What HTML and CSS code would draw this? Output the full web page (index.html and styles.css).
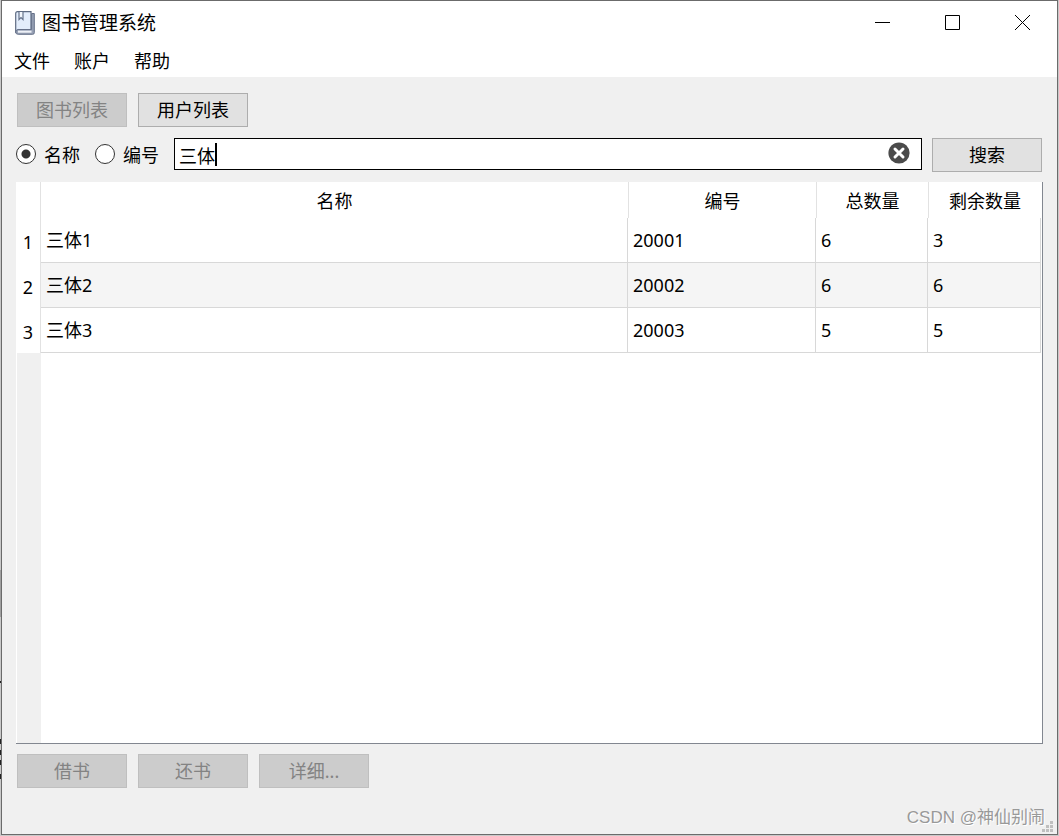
FILE: index.html
```html
<!DOCTYPE html>
<html lang="zh-CN">
<head>
<meta charset="utf-8">
<title>图书管理系统</title>
<link rel="stylesheet" href="styles.css">
</head>
<body>
<div class="window">
  <header class="titlebar">
    <svg class="app-icon" width="20" height="24" viewBox="0 0 20 24" aria-hidden="true">
      <path d="M2.500.7H16v18H3.500L.7 21V2.500Q.7.7 2.500.7Z" fill="#e3edfb" stroke="#5e6b82" stroke-width="1.200"/>
      <path d="M16.600 2.500h2.700v19.200q0 1.600-1.600 1.600H3.200Q.7 23.300.7 21t2.500-2.500H16.600Z" fill="#98a2b6" stroke="#667189" stroke-width="1"/>
      <path d="M3 20.700H16.500" stroke="#eef1f7" stroke-width="2"/>
      <path d="M4 1v7.500l2-2 2 2V1" fill="#f2f6fc" stroke="#66748c" stroke-width="1.200"/>
    </svg>
    <h1 class="title">图书管理系统</h1>
    <div class="window-controls">
      <button class="window-button" type="button" aria-label="最小化"><svg width="15" height="15"><path d="M0 7.500H15" stroke="#000"/></svg></button>
      <button class="window-button" type="button" aria-label="最大化"><svg width="15" height="15"><path d="M.5.5h14v14H.5Z" fill="none" stroke="#000"/></svg></button>
      <button class="window-button" type="button" aria-label="关闭"><svg width="15" height="15"><path d="M0 0L15 15M15 0L0 15" stroke="#000"/></svg></button>
    </div>
  </header>
  <nav class="menubar">
    <button class="menu" type="button">文件</button>
    <button class="menu" type="button">账户</button>
    <button class="menu" type="button">帮助</button>
  </nav>
  <main class="content">
    <div class="button-row">
      <button class="button" type="button" disabled>图书列表</button>
      <button class="button" type="button">用户列表</button>
    </div>
    <form class="search-row">
      <label class="option"><input class="radio" type="radio" name="field" checked>名称</label>
      <label class="option"><input class="radio" type="radio" name="field">编号</label>
      <div class="search-box">
        <input class="search-input" type="text" value="三体" aria-label="搜索内容">
        <span class="caret"></span>
        <button class="clear" type="button" aria-label="清除">
          <svg width="22" height="22" viewBox="0 0 22 22"><circle cx="11" cy="11" r="10.600" fill="#4b4b4b"/><path d="M7 7l8 8M15 7l-8 8" stroke="#fff" stroke-width="3" stroke-linecap="round"/></svg>
        </button>
      </div>
      <button class="button" type="button">搜索</button>
    </form>
    <div class="table-view">
      <table class="books">
        <colgroup><col class="col-index"><col><col class="col-id"><col class="col-total"><col class="col-left"></colgroup>
        <thead>
          <tr><td></td><th scope="col">名称</th><th scope="col">编号</th><th scope="col">总数量</th><th scope="col">剩余数量</th></tr>
        </thead>
        <tbody>
          <tr><th scope="row">1</th><td>三体1</td><td>20001</td><td>6</td><td>3</td></tr>
          <tr><th scope="row">2</th><td>三体2</td><td>20002</td><td>6</td><td>6</td></tr>
          <tr><th scope="row">3</th><td>三体3</td><td>20003</td><td>5</td><td>5</td></tr>
        </tbody>
      </table>
    </div>
    <div class="button-row">
      <button class="button" type="button" disabled>借书</button>
      <button class="button" type="button" disabled>还书</button>
      <button class="button" type="button" disabled>详细...</button>
    </div>
  </main>
  <svg class="size-grip" width="11" height="11" aria-hidden="true"><path d="M8 0h3v3H8ZM4 4h3v3H4ZM8 4h3v3H8ZM0 8h3v3H0ZM4 8h3v3H4ZM8 8h3v3H8Z" fill="#bfbfbf"/></svg>
  <span class="watermark">CSDN @神仙别闹</span>
</div>
</body>
</html>
```
FILE: styles.css
```css
* {
  box-sizing: border-box;
}

body {
  margin: 0;
  height: 100vh;
  padding: 0 1px 1px;
  background: linear-gradient(#c9c9c9 570px, #a0a0a0 570px 617px, #c9c9c9 617px 681px, #222 681px 683px, #c9c9c9 683px 739px, #222 739px 744px, #c9c9c9 744px 750px, #222 750px 755px, #c9c9c9 755px 760px, #222 760px 765px, #c9c9c9 765px 774px, #222 774px 779px, #c9c9c9 779px) left / 1px 100% no-repeat #c9c9c9;
  color: #000;
  font: 400 18px/24px "Noto Sans", "Noto Sans CJK SC", sans-serif;
}

button,
input {
  font: inherit;
  color: inherit;
}

.window {
  position: relative;
  display: flex;
  flex-direction: column;
  height: 100%;
  border: 1px solid #6b6b6b;
  background: #f0f0f0;
}

.titlebar {
  display: flex;
  align-items: center;
  height: 43px;
  padding-left: 13px;
  background: #fff;
}

.title {
  flex: 1;
  margin: 0 0 0 7px;
  font-size: 19px;
  font-weight: 400;
}

.window-controls {
  display: flex;
}

.window-button {
  display: flex;
  align-items: center;
  justify-content: center;
  width: 70px;
  height: 43px;
  padding: 0;
  border: 0;
  background: none;
}

.menubar {
  display: flex;
  height: 33px;
  padding-left: 12px;
  gap: 24px;
  background: #fff;
}

.menu {
  height: 33px;
  padding: 0;
  border: 0;
  background: none;
}

.content {
  display: flex;
  flex: 1;
  flex-direction: column;
  gap: 10px;
  padding: 16px 14px 46px;
}

.button-row {
  display: flex;
  gap: 11px;
  padding-left: 1px;
}

.button {
  width: 110px;
  height: 34px;
  padding: 0;
  border: 1px solid #adadad;
  background: #e1e1e1;
}

.button:disabled {
  border-color: #bfbfbf;
  background: #ccc;
  color: #838383;
}

.search-row {
  display: flex;
  align-items: center;
  margin-top: 1px;
  padding-right: 1px;
}

.option {
  display: flex;
  align-items: center;
  gap: 8px;
  margin-right: 15px;
}

.radio {
  appearance: none;
  width: 20px;
  height: 20px;
  margin: 0 0 2px;
  border: 1px solid #333;
  border-radius: 50%;
  background: #fff;
}

.radio:checked {
  background: radial-gradient(circle, #333 4px, #fff 5px);
}

.search-box {
  position: relative;
  flex: 1;
  height: 34px;
  margin-right: 10px;
}

.search-input {
  display: block;
  width: 100%;
  height: 32px;
  padding: 2px 40px 0 4px;
  border: 1px solid #000;
  border-radius: 0;
  background: #fff;
  outline: 0;
}

.caret {
  position: absolute;
  top: 5px;
  left: 41px;
  width: 2px;
  height: 23px;
  background: #000;
}

.clear {
  position: absolute;
  top: 4px;
  right: 12px;
  display: flex;
  padding: 0;
  border: 0;
  background: none;
}

.table-view {
  flex: 1;
  padding-right: 1px;
  border-right: 1px solid #828790;
  border-bottom: 1px solid #828790;
  background: linear-gradient(to right, #fff 1px, #f0f0f0 1px 25px, #fff 25px);
}

.books {
  width: 100%;
  table-layout: fixed;
  border-collapse: separate;
  border-spacing: 0;
  background: #fff;
}

.col-index {
  width: 25px;
}

.col-id {
  width: 188px;
}

.col-total {
  width: 112px;
}

.col-left {
  width: 113px;
}

.books th,
.books td {
  padding: 0;
  font-weight: 400;
}

.books thead tr {
  height: 36px;
}

.books thead th {
  padding-top: 2px;
  border-left: 1px solid #e2e2e2;
}

.books thead td,
.books tbody th {
  border-right: 1px solid #e2e2e2;
}

.books thead th:nth-child(2) {
  border-left: 0;
}

.books tbody tr {
  height: 45px;
}

.books tbody th {
  padding-top: 2px;
}

.books tbody td {
  padding-left: 5px;
  border-right: 1px solid #d8d8d8;
  border-bottom: 1px solid #d8d8d8;
}

.books tbody tr:nth-child(even) td {
  background: #f5f5f5;
}

.size-grip {
  position: absolute;
  right: 4px;
  bottom: 2px;
}

.watermark {
  position: absolute;
  right: 12px;
  bottom: 4px;
  color: #999;
  font-family: "Liberation Sans", "Noto Sans CJK SC", sans-serif;
  font-size: 17px;
  text-shadow: 1px 1px 0 #fff;
}
```
